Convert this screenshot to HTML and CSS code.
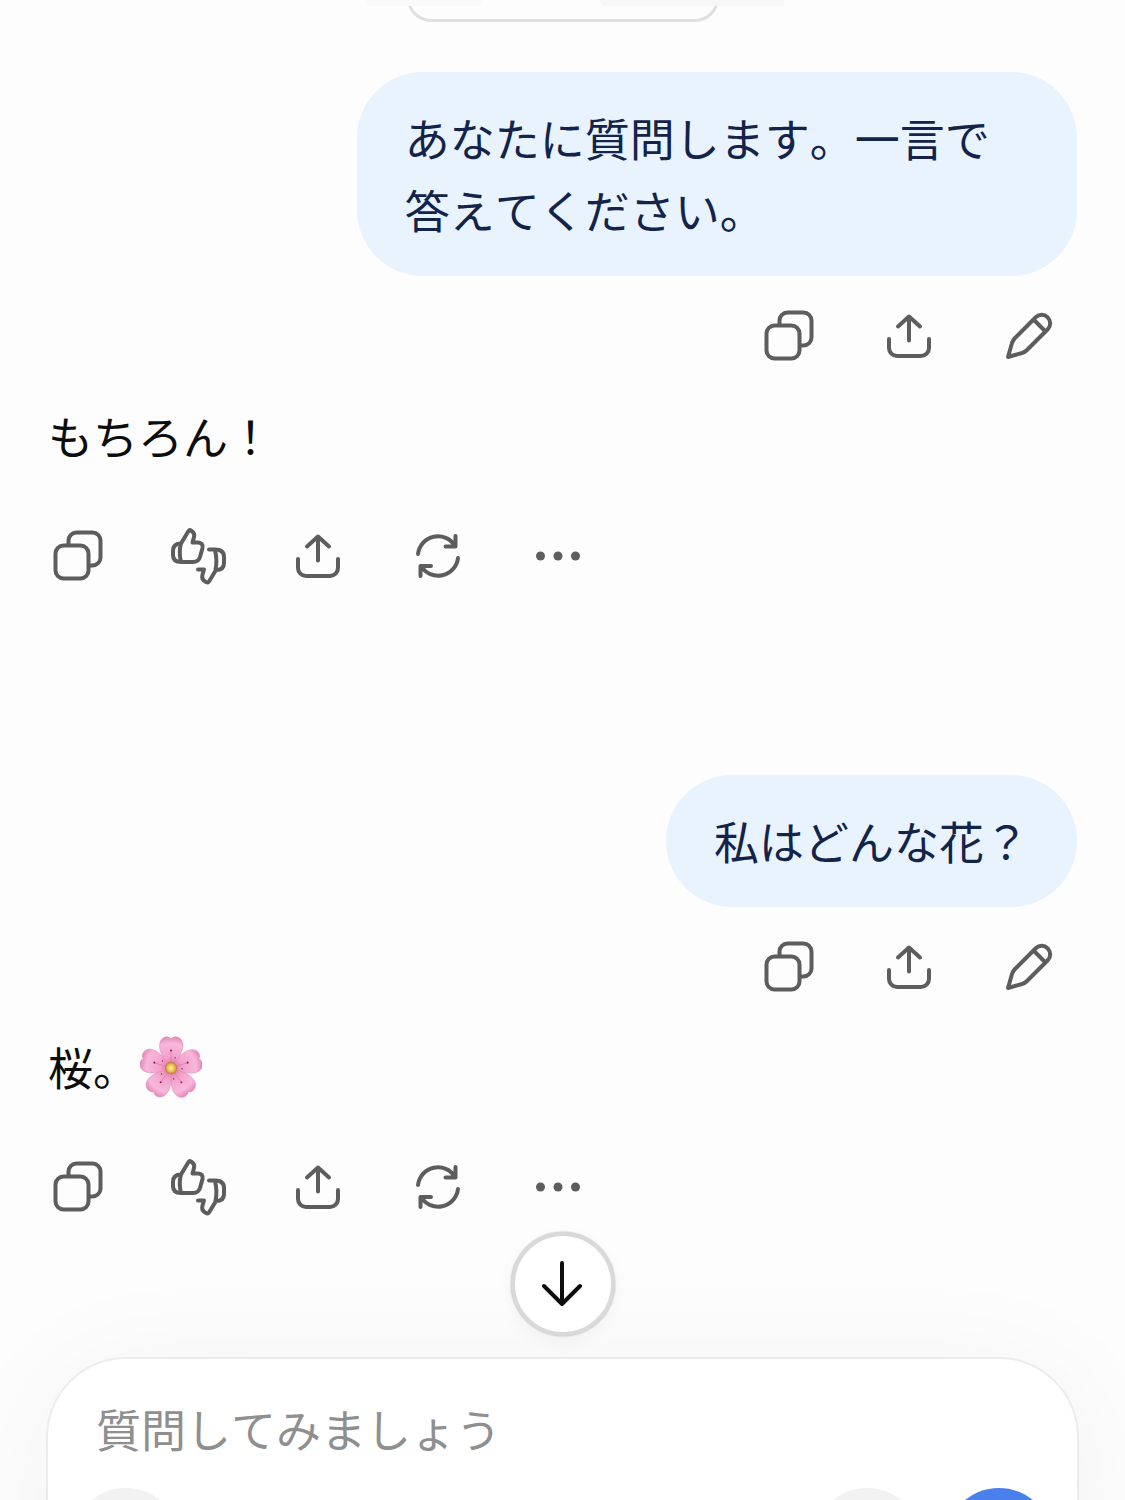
FILE: index.html
```html
<!DOCTYPE html>
<html lang="ja">
<head>
  <meta charset="UTF-8" />
  <meta name="viewport" content="width=device-width, initial-scale=1" />
  <title>チャット</title>
  <link rel="stylesheet" href="styles.css">
</head>
<body>

  <!-- shared icons -->
  <svg class="sprite" aria-hidden="true">
    <symbol id="copy" viewBox="0 0 60 60">
      <rect x="7.5" y="19.5" width="33" height="33" rx="8" />
      <path d="M20.5 19v-4.500a8 8 0 0 1 8-8h16a8 8 0 0 1 8 8v17a8 8 0 0 1-8 8H41" />
    </symbol>
    <symbol id="share" viewBox="0 0 60 60">
      <path d="M30 34.500V10.500M19 20.500l11-10 11 10M10 33v9a8 8 0 0 0 8 8h24a8 8 0 0 0 8-8v-9" />
    </symbol>
    <symbol id="edit" viewBox="0 0 60 60">
      <path d="M9 51l4-14q1-3 3-5l21-21a8.500 8.500 0 0 1 12 12L28 44q-2 2-5 3zM35 14l11 11" />
    </symbol>
    <symbol id="rate" viewBox="0 0 60 60">
      <path d="M13 17.500L20.500 5Q21.500 3.500 23 4.500Q27 7 26 11L24.500 16.500H30Q35.500 17 34.500 22L32 31Q30.500 36 25 36H13Q5 36 5 29V25Q5 17.500 13 17.500Q10.500 26 13 36" />
      <path d="M41 23.500H47Q56 23.500 56 31V37Q56 44 48 44L41 55.500Q40 57 38 56Q33 53.500 34.500 48.500L36 43.500H30M47 24Q49.500 34 47.500 44" />
    </symbol>
    <symbol id="retry" viewBox="0 0 60 60">
      <path d="M10 28A20 20 0 0 1 47 20M47.500 10v10.500H37.500M50 32A20 20 0 0 1 13 40M12.500 50V40H23" />
    </symbol>
    <symbol id="more" viewBox="0 0 60 60">
      <circle class="dot" cx="12.500" cy="30" r="4.500" />
      <circle class="dot" cx="30" cy="30" r="4.500" />
      <circle class="dot" cx="47.500" cy="30" r="4.500" />
    </symbol>
  </svg>

  <header class="topbar">
    <span class="topbar-left"></span>
    <span class="topbar-right"></span>
  </header>

  <main class="thread">
    <div class="chip"></div>

    <section class="turn">
      <p class="bubble">あなたに質問します。一言で答えてください。</p>
      <div class="actions actions-user">
        <button type="button" aria-label="コピー"><svg><use href="#copy" /></svg></button>
        <button type="button" aria-label="共有"><svg><use href="#share" /></svg></button>
        <button type="button" aria-label="編集"><svg><use href="#edit" /></svg></button>
      </div>
      <p class="reply">もちろん！</p>
      <div class="actions">
        <button type="button" aria-label="コピー"><svg><use href="#copy" /></svg></button>
        <button type="button" aria-label="評価"><svg><use href="#rate" /></svg></button>
        <button type="button" aria-label="共有"><svg><use href="#share" /></svg></button>
        <button type="button" aria-label="再生成"><svg><use href="#retry" /></svg></button>
        <button type="button" aria-label="その他"><svg><use href="#more" /></svg></button>
      </div>
    </section>

    <section class="turn">
      <p class="bubble">私はどんな花？</p>
      <div class="actions actions-user">
        <button type="button" aria-label="コピー"><svg><use href="#copy" /></svg></button>
        <button type="button" aria-label="共有"><svg><use href="#share" /></svg></button>
        <button type="button" aria-label="編集"><svg><use href="#edit" /></svg></button>
      </div>
      <p class="reply">桜。<svg class="flower" viewBox="0 0 60 60" role="img" aria-label="桜の花">
          <defs>
            <radialGradient id="petalFill" gradientUnits="userSpaceOnUse" cx="30" cy="31" r="30">
              <stop offset="0" stop-color="#d9659c" />
              <stop offset="0.350" stop-color="#f3a0cb" />
              <stop offset="0.800" stop-color="#f8b7da" />
              <stop offset="1" stop-color="#e58bbb" />
            </radialGradient>
            <radialGradient id="coreFill">
              <stop offset="0" stop-color="#fff3a0" />
              <stop offset="0.600" stop-color="#e8bd4c" />
              <stop offset="1" stop-color="#b9733f" />
            </radialGradient>
            <g id="petal">
              <path d="M30 31C25 25 18 16 19 8C19.500 3 24 0 27 1Q29 1 30 3Q31 1 33 1C37 0 41 3 41.500 8C42 16 35 25 30 31z" fill="url(#petalFill)" stroke="#dd82b3" stroke-width="0.500" />
              <path d="M30 25V15" stroke="#dc76aa" stroke-width="0.700" />
              <circle cx="30" cy="14" r="1" fill="#8d2053" />
              <circle cx="34" cy="21" r="0.700" fill="#8d2053" />
            </g>
          </defs>
          <use href="#petal" transform="rotate(144 30 31)" />
          <use href="#petal" transform="rotate(216 30 31)" />
          <use href="#petal" transform="rotate(72 30 31)" />
          <use href="#petal" transform="rotate(288 30 31)" />
          <use href="#petal" />
          <circle cx="30" cy="31" r="6" fill="url(#coreFill)" />
        </svg></p>
      <div class="actions">
        <button type="button" aria-label="コピー"><svg><use href="#copy" /></svg></button>
        <button type="button" aria-label="評価"><svg><use href="#rate" /></svg></button>
        <button type="button" aria-label="共有"><svg><use href="#share" /></svg></button>
        <button type="button" aria-label="再生成"><svg><use href="#retry" /></svg></button>
        <button type="button" aria-label="その他"><svg><use href="#more" /></svg></button>
      </div>
    </section>
  </main>

  <footer class="dock">
    <button type="button" class="scroll-down" aria-label="一番下へ">
      <svg viewBox="0 0 60 60"><path d="M29 9v41M11 32l18 18 18-18" /></svg>
    </button>
    <form class="composer">
      <textarea rows="1" aria-label="メッセージ" placeholder="質問してみましょう"></textarea>
      <div class="tools">
        <button type="button" class="round" aria-label="追加"></button>
        <button type="button" class="round mic" aria-label="音声入力"></button>
        <button type="submit" class="round send" aria-label="送信"></button>
      </div>
    </form>
  </footer>

</body>
</html>
```
FILE: styles.css
```css
* {
  box-sizing: border-box;
}
body {
  margin: 0;
  height: 100vh;
  overflow: hidden;
  background: #fdfdfd;
  color: #0d0d0d;
  font-family: "Noto Sans CJK JP", sans-serif;
  font-size: 45px;
  font-kerning: none;
  line-height: 72px;
}
p {
  margin: 0;
}
button {
  padding: 0;
  border: none;
  background: none;
  cursor: pointer;
}
svg {
  fill: none;
  stroke-linecap: round;
  stroke-linejoin: round;
}
.sprite {
  display: none;
}
.dot {
  fill: #5d5d5d;
  stroke: none;
}

/* bottom edge of the header */
.topbar {
  position: relative;
  z-index: 1;
  display: flex;
  justify-content: center;
  gap: 118px;
  height: 6px;
  padding-left: 24px;
  background: #fdfdfd;
}
.topbar span {
  width: 116px;
  background: #fafafa;
}
.topbar .topbar-right {
  width: 184px;
  background: #f7f7f7;
  border-bottom-left-radius: 6px;
}

.thread {
  padding: 0 48px 124px;
}
.chip {
  width: 312px;
  height: 60px;
  margin: -44px auto 50px;
  border: 3px solid #e0e0e0;
  border-radius: 24px;
}
.turn {
  display: flex;
  flex-direction: column;
  align-items: flex-start;
}
.turn + .turn {
  margin-top: 171px;
}
.bubble {
  align-self: flex-end;
  max-width: 70%;
  padding: 30px 48px;
  border-radius: 66px;
  background: #e8f3fe;
  color: #13234a;
}
.reply {
  display: flex;
  align-items: center;
  margin: 16px 0 36px;
}
.flower {
  width: 62px;
  height: 62px;
  margin-left: 2px;
}
.actions {
  display: flex;
  gap: 24px;
  margin-left: -18px;
}
.actions-user {
  align-self: flex-end;
  margin: 12px 0 0;
}
.actions button {
  display: grid;
  place-items: center;
  width: 96px;
  height: 96px;
}
.actions svg {
  width: 60px;
  height: 60px;
  stroke: #5d5d5d;
  stroke-width: 4;
}

.dock {
  position: relative;
  padding: 0 48px;
}
.scroll-down {
  position: absolute;
  bottom: calc(100% + 23px);
  left: 50%;
  display: grid;
  place-items: center;
  width: 104px;
  height: 104px;
  margin-left: -52px;
  border: 4px solid #d9d9d9;
  border-radius: 50%;
  background: #fff;
  box-shadow: 0 0 2px rgba(0, 0, 0, 0.3), 0 6px 18px rgba(0, 0, 0, 0.04);
}
.scroll-down svg {
  width: 60px;
  height: 60px;
  stroke: #0d0d0d;
  stroke-width: 4;
}
.composer {
  padding: 34px 24px 24px;
  border-radius: 78px;
  background: #fff;
  box-shadow: 0 0 0 2px rgba(0, 0, 0, 0.05), 0 12px 120px rgba(0, 0, 0, 0.05);
}
.composer textarea {
  display: block;
  width: 100%;
  height: 72px;
  padding: 0 24px;
  border: none;
  outline: none;
  resize: none;
  overflow: hidden;
  background: none;
  font: inherit;
}
.composer textarea::placeholder {
  color: #8f8f8f;
}
.tools {
  display: flex;
  gap: 24px;
  margin-top: 23px;
}
.round {
  width: 108px;
  height: 108px;
  border-radius: 50%;
  background: #f2f2f2;
}
.mic {
  margin-left: auto;
}
.send {
  background: #4a80ee;
}
```
